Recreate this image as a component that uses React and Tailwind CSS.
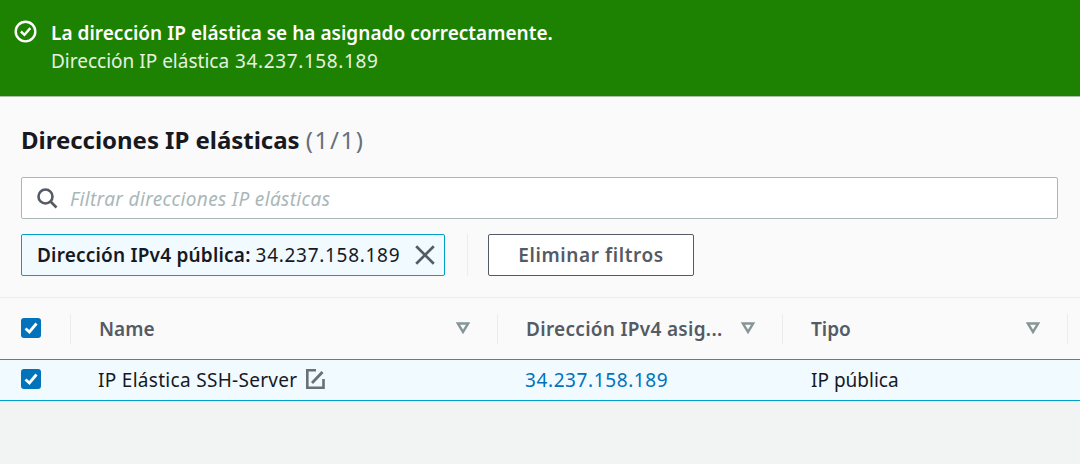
import React from "react";

const font = { fontFamily: '"Noto Sans", sans-serif' };

function Check() {
  return (
    <span className="flex items-center justify-center w-[20px] h-[20px] rounded-[3px] bg-[#0073bb] mb-[2px]">
      <svg width="14" height="14" viewBox="0 0 14 14" fill="none" stroke="white" strokeWidth="2.8">
        <path d="M1.5 7.5 L5.4 11 L12.5 2.5" />
      </svg>
    </span>
  );
}

function Caret() {
  return (
    <svg width="14" height="12" viewBox="0 0 14 12" fill="none" stroke="#879596" strokeWidth="2.4" className="mb-[1px]">
      <path d="M1.8 1.5 H12.2 L7 10 Z" />
    </svg>
  );
}

function Sep() {
  return <span className="block w-px h-[30px] bg-[#eaeded] shrink-0" />;
}

export default function App() {
  return (
    <div className="w-[1080px] h-[464px] overflow-hidden bg-[#f2f3f3] flex flex-col text-[#16191f]" style={font}>
      <div className="h-[97px] bg-[#1d8102] border-b border-[#a9c3a2] flex items-start pt-[19px] pl-[14px] text-white shrink-0">
        <svg width="23" height="23" viewBox="0 0 22 22" fill="none" stroke="white" strokeWidth="2.3" className="mt-[1px]">
          <circle cx="11" cy="11" r="9.4" />
          <path d="M6.6 11 L10 14.2 L15.6 7.8" />
        </svg>
        <div className="ml-[14px]">
          <div className="text-[19px] font-semibold tracking-[0.02px] leading-[28px]">La dirección IP elástica se ha asignado correctamente.</div>
          <div className="text-[19px] leading-[28px] text-[#e6f1e2]">
            Dirección IP elástica <span className="ml-[1px] tracking-[0.62px]">34.237.158.189</span>
          </div>
        </div>
      </div>

      <div className="bg-[#fafafa] shrink-0">
        <div className="pl-[21px] pr-[22px] pt-[25px] pb-[21px] border-b border-[#eaeded]">
          <div className="text-[24px] tracking-[-0.03px] leading-[36px] font-bold h-[36px]">
            Direcciones IP elásticas <span className="font-normal tracking-[1.6px] text-[#687078]">(1/1)</span>
          </div>
          <div className="mt-[19px] h-[42px] bg-white border border-[#aab7b8] rounded-[2px] flex items-center pl-[14px]">
            <svg width="22" height="22" viewBox="0 0 22 22" fill="none" stroke="#545b64" strokeWidth="2.6">
              <circle cx="9.5" cy="9.5" r="7" />
              <path d="M14.5 14.5 L20.5 20.5" />
            </svg>
            <span className="ml-[12px] mt-[3px] text-[19px] tracking-[0.36px] italic text-[#aab7b8]">Filtrar direcciones IP elásticas</span>
          </div>
          <div className="mt-[15px] flex items-center">
            <div className="h-[42px] w-[424px] bg-[#f1faff] border border-[#00a1c9] rounded-[2px] flex items-center pl-[15px]">
              <span className="text-[19px] tracking-[0.2px] font-semibold whitespace-nowrap">Dirección IPv4 pública:</span>
              <span className="text-[19px] tracking-[0.7px] ml-[5px] whitespace-nowrap">34.237.158.189</span>
              <svg width="22" height="22" viewBox="0 0 20 20" fill="none" stroke="#545b64" strokeWidth="2.4" className="ml-[14px] shrink-0">
                <path d="M2 2 L18 18 M18 2 L2 18" />
              </svg>
            </div>
            <span className="ml-[22px] w-px h-[42px] bg-[#eaeded]" />
            <div className="ml-[20px] h-[42px] w-[206px] bg-white border border-[#545b64] rounded-[2px] flex items-center justify-center text-[19px] tracking-[0.6px] font-semibold text-[#545b64]">
              Eliminar filtros
            </div>
          </div>
        </div>

        <div className="h-[61px] flex items-center">
          <div className="w-[71px] flex items-center justify-between pl-[21px] shrink-0">
            <Check />
            <Sep />
          </div>
          <div className="w-[427px] flex items-center shrink-0 pl-[28px] text-[#545b64] text-[19px] font-semibold">
            <span className="flex-1 mt-[1px]">Name</span>
            <Caret />
            <span className="ml-[27px] block"><Sep /></span>
          </div>
          <div className="w-[285px] flex items-center shrink-0 pl-[28px] text-[#545b64] text-[19px] tracking-[0.3px] font-semibold">
            <span className="flex-1 mt-[1px] whitespace-nowrap">Dirección IPv4 asig...</span>
            <Caret />
            <span className="ml-[27px] block"><Sep /></span>
          </div>
          <div className="w-[285px] flex items-center shrink-0 pl-[28px] text-[#545b64] text-[19px] font-semibold">
            <span className="flex-1 mt-[1px]">Tipo</span>
            <Caret />
            <span className="ml-[27px] block"><Sep /></span>
          </div>
        </div>
      </div>

      <div className="h-[42px] shrink-0 bg-[#f1faff] border-y border-[#00a1c9] flex items-center text-[19px]">
        <div className="w-[71px] pl-[21px] shrink-0"><Check /></div>
        <div className="w-[427px] pl-[27px] shrink-0 flex items-center">
          <span className="whitespace-nowrap tracking-[0.3px]">IP Elástica SSH-Server</span>
          <svg width="20" height="22" viewBox="0 0 20 22" fill="none" stroke="#687078" strokeWidth="2.6" className="ml-[8px] mb-[3px]">
            <path d="M11 2.3 H2.3 V19.7 H18.5 V11" />
            <path d="M7 15 L17.5 4" strokeWidth="2.8" />
          </svg>
        </div>
        <div className="w-[285px] pl-[27px] shrink-0 text-[#0073bb] tracking-[0.6px]">34.237.158.189</div>
        <div className="w-[285px] pl-[28px] shrink-0">IP pública</div>
      </div>
    </div>
  );
}
